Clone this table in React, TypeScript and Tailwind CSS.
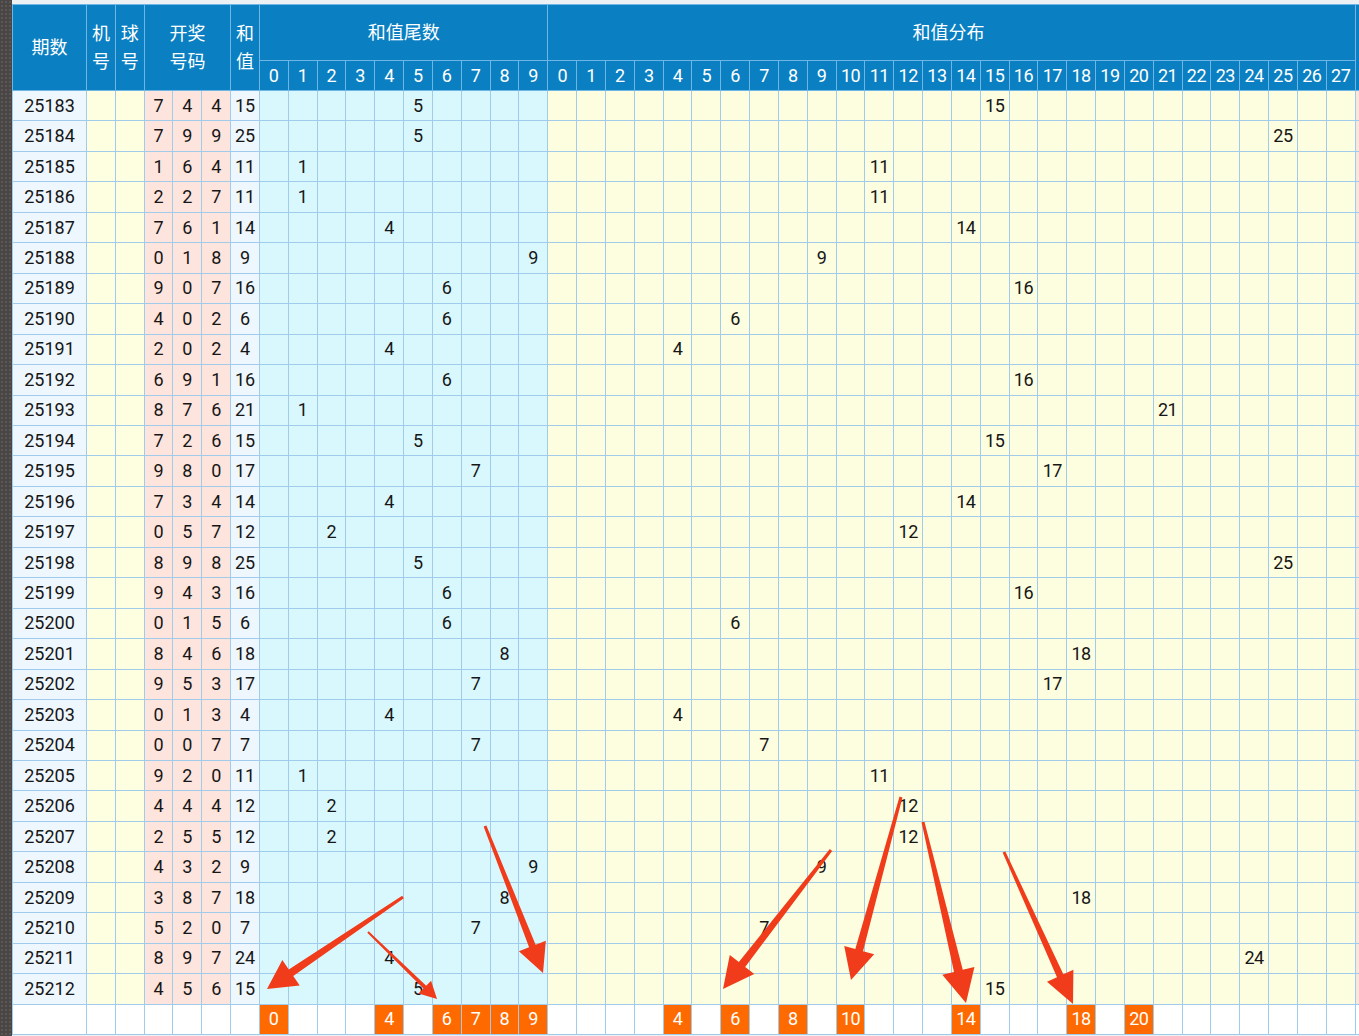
import React from "react";

type Draw = [string, number, number, number];

const draws: Draw[] = [
  ["25183", 7, 4, 4],
  ["25184", 7, 9, 9],
  ["25185", 1, 6, 4],
  ["25186", 2, 2, 7],
  ["25187", 7, 6, 1],
  ["25188", 0, 1, 8],
  ["25189", 9, 0, 7],
  ["25190", 4, 0, 2],
  ["25191", 2, 0, 2],
  ["25192", 6, 9, 1],
  ["25193", 8, 7, 6],
  ["25194", 7, 2, 6],
  ["25195", 9, 8, 0],
  ["25196", 7, 3, 4],
  ["25197", 0, 5, 7],
  ["25198", 8, 9, 8],
  ["25199", 9, 4, 3],
  ["25200", 0, 1, 5],
  ["25201", 8, 4, 6],
  ["25202", 9, 5, 3],
  ["25203", 0, 1, 3],
  ["25204", 0, 0, 7],
  ["25205", 9, 2, 0],
  ["25206", 4, 4, 4],
  ["25207", 2, 5, 5],
  ["25208", 4, 3, 2],
  ["25209", 3, 8, 7],
  ["25210", 5, 2, 0],
  ["25211", 8, 9, 7],
  ["25212", 4, 5, 6],
];

const TAILS = Array.from({ length: 10 }, (_, i) => i);
const SUMS = Array.from({ length: 28 }, (_, i) => i);
const tailPicks = new Set([0, 4, 6, 7, 8, 9]);
const sumPicks = new Set([4, 6, 8, 10, 14, 18, 20]);

// x1,y1 tail -> x2,y2 tip; w0 tail width, w1 width near head, hw head width, hl head length
const arrows = [
  [403, 897, 267, 989, 3, 8, 31, 29],
  [368, 932, 437, 999, 2, 4, 18, 17],
  [485, 826, 543, 973, 3, 7, 29, 29],
  [831, 850, 723, 989, 3, 8, 31, 31],
  [901, 797, 851, 980, 3, 8, 31, 31],
  [923, 822, 966, 1003, 3, 9, 33, 33],
  [1004, 852, 1073, 1004, 3, 7, 29, 31],
];

function arrowPoints(a: number[]) {
  const [x1, y1, x2, y2, w0, w1, hw, hl] = a;
  const len = Math.hypot(x2 - x1, y2 - y1);
  const ux = (x2 - x1) / len;
  const uy = (y2 - y1) / len;
  const nx = -uy;
  const ny = ux;
  const bx = x2 - ux * hl;
  const by = y2 - uy * hl;
  const p = (x: number, y: number, d: number) => `${x + nx * d},${y + ny * d}`;
  return [
    p(x1, y1, w0 / 2),
    p(bx, by, w1 / 2),
    p(bx, by, hw / 2),
    `${x2},${y2}`,
    p(bx, by, -hw / 2),
    p(bx, by, -w1 / 2),
    p(x1, y1, -w0 / 2),
  ].join(" ");
}

const td = "border border-[#a0cbeb] p-0 text-center h-[30.46px]";
const th = "border border-[#6fb6e4] p-0 text-center font-normal";

export default function App() {
  return (
    <div className="relative flex h-[1036px] w-[1359px] overflow-hidden bg-[#eef1f4] font-['Roboto','Noto_Sans_CJK_SC',sans-serif] text-[18px] leading-none text-[#161616]">
      <div className="w-[12px] shrink-0 bg-[#4a4646] bg-[radial-gradient(#5c5757_1px,transparent_1px)] bg-[length:4px_4px]" />
      <div className="flex flex-col pt-[4px]">
        <table className="w-[1373px] table-fixed border-collapse">
          <colgroup>
            <col className="w-[74px]" />
            {Array.from({ length: 44 }, (_, i) => (
              <col key={i} className="w-[28.84px]" />
            ))}
            <col className="w-[30px]" />
          </colgroup>
          <thead className="bg-[#0a7fc2] text-white">
            <tr className="h-[56px]">
              <th rowSpan={2} className={th}>期数</th>
              <th rowSpan={2} className={`${th} leading-[28px]`}>机<br />号</th>
              <th rowSpan={2} className={`${th} leading-[28px]`}>球<br />号</th>
              <th rowSpan={2} colSpan={3} className={`${th} leading-[28px]`}>开奖<br />号码</th>
              <th rowSpan={2} className={`${th} leading-[28px]`}>和<br />值</th>
              <th colSpan={10} className={th}>和值尾数</th>
              <th colSpan={28} className={`${th} pr-[6px]`}>和值分布</th>
              <th rowSpan={2} className={th} />
            </tr>
            <tr className="h-[30px]">
              {TAILS.map((n) => (
                <th key={`t${n}`} className={th}>{n}</th>
              ))}
              {SUMS.map((n) => (
                <th key={`s${n}`} className={`${th} tracking-[-0.5px]`}>{n}</th>
              ))}
            </tr>
          </thead>
          <tbody>
            {draws.map(([issue, a, b, c]) => {
              const sum = a + b + c;
              const tail = sum % 10;
              return (
                <tr key={issue}>
                  <td className={`${td} bg-[#eef6fe]`}>{issue}</td>
                  <td className={`${td} bg-[#fefee1]`} />
                  <td className={`${td} bg-[#fefee1]`} />
                  {[a, b, c].map((d, i) => (
                    <td key={i} className={`${td} bg-[#fde4dd]`}>{d}</td>
                  ))}
                  <td className={`${td} bg-[#eef6fe]`}>{sum}</td>
                  {TAILS.map((n) => (
                    <td key={`t${n}`} className={`${td} bg-[#d9f8fe]`}>
                      {n === tail ? tail : null}
                    </td>
                  ))}
                  {SUMS.map((n) => (
                    <td key={`s${n}`} className={`${td} bg-[#fdfde0] tracking-[-0.5px]`}>
                      {n === sum ? sum : null}
                    </td>
                  ))}
                  <td className={`${td} bg-[#fde4dd]`} />
                </tr>
              );
            })}
            <tr>
              {Array.from({ length: 7 }, (_, i) => (
                <td key={i} className={`${td} bg-white`} />
              ))}
              {TAILS.map((n) =>
                tailPicks.has(n) ? (
                  <td key={`t${n}`} className={`${td} bg-[#ff6a00] text-white`}>{n}</td>
                ) : (
                  <td key={`t${n}`} className={`${td} bg-white`} />
                )
              )}
              {SUMS.map((n) =>
                sumPicks.has(n) ? (
                  <td key={`s${n}`} className={`${td} bg-[#ff6a00] text-white tracking-[-0.5px]`}>{n}</td>
                ) : (
                  <td key={`s${n}`} className={`${td} bg-white`} />
                )
              )}
              <td className={`${td} bg-white`} />
            </tr>
          </tbody>
        </table>
      </div>
      <svg className="pointer-events-none absolute left-0 top-0" width={1359} height={1036}>
        {arrows.map((a, i) => (
          <polygon key={i} points={arrowPoints(a)} fill="#f03c1a" />
        ))}
      </svg>
    </div>
  );
}
